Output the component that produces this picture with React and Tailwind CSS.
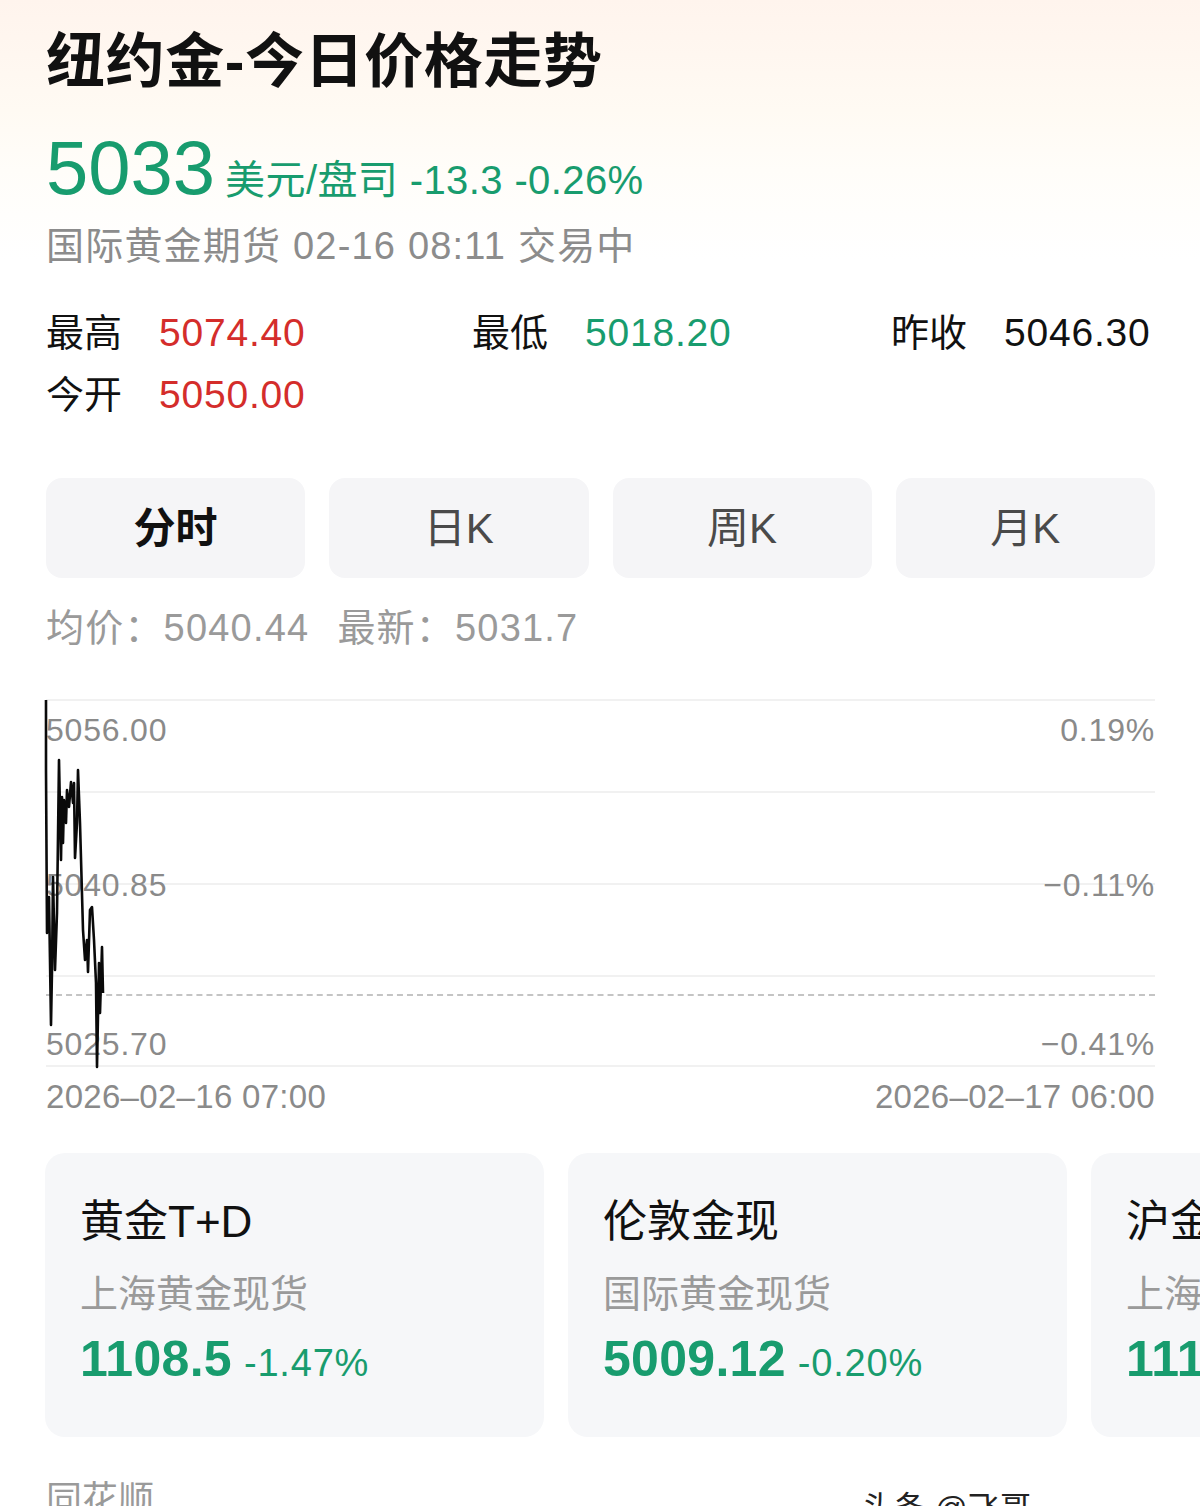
import React from "react";

const linePoints = [
  [0, 1], [0, 71], [1, 234], [3, 198], [5, 326], [6, 271], [7, 178], [9, 271],
  [11, 214], [13, 61], [15, 161], [16, 98], [17, 144], [18, 101], [20, 124],
  [21, 91], [23, 108], [25, 83], [27, 104], [28, 84], [29, 159], [31, 124],
  [32, 71], [34, 124], [37, 231], [39, 261], [41, 241], [42, 273], [44, 211],
  [46, 208], [48, 241], [50, 284], [51, 368], [53, 264], [54, 314], [56, 248],
  [57, 294],
];

const stats = [
  { label: "最高", value: "5074.40", color: "text-[#d42d2b]" },
  { label: "最低", value: "5018.20", color: "text-[#189c6e]" },
  { label: "昨收", value: "5046.30", color: "text-[#111]" },
];

const tabs = ["分时", "日K", "周K", "月K"];

const cards = [
  { title: "黄金T+D", sub: "上海黄金现货", price: "1108.5", pct: "-1.47%" },
  { title: "伦敦金现", sub: "国际黄金现货", price: "5009.12", pct: "-0.20%" },
  { title: "沪金主连", sub: "上海期货交易", price: "1110.36", pct: "-1.35%" },
];

const PriceChart = () => (
  <div className="relative h-[368px] mt-[46px]">
    {/* grid rows */}
    <div className="flex flex-col h-full">
      {[0, 1, 2, 3].map((i) => (
        <div key={i} className="h-[92px] border-t-2 border-[#f1f1f1] last:border-b-2" />
      ))}
    </div>
    <div className="absolute left-0 right-0 top-[295px] border-t-2 border-dashed border-[#c4c4c4]" />
    <div className="absolute inset-0 text-[32px] leading-[40px] text-[#8a8a8a] tracking-[0.8px]">
      <div className="absolute left-0 right-0 top-[11px] flex justify-between">
        <span>5056.00</span>
        <span>0.19%</span>
      </div>
      <div className="absolute left-0 right-0 top-[166px] flex justify-between">
        <span>5040.85</span>
        <span>−0.11%</span>
      </div>
      <div className="absolute left-0 right-0 top-[325px] flex justify-between">
        <span>5025.70</span>
        <span>−0.41%</span>
      </div>
    </div>
    <svg className="absolute left-0 top-0 overflow-visible" width="1109" height="368" viewBox="0 0 1109 368">
      <polyline
        points={linePoints.map(([x, y]) => `${x},${y}`).join(" ")}
        fill="none"
        stroke="#0a0a0a"
        strokeWidth="2.6"
        strokeLinejoin="round"
      />
    </svg>
  </div>
);

const App = () => {
  return (
    <div className="w-[1200px] h-[1506px] overflow-hidden bg-[linear-gradient(180deg,#fff4ed_0px,#fffaf3_110px,#fffdf9_170px,#ffffff_260px)] font-['Liberation_Sans','Noto_Sans_CJK_SC',sans-serif] text-[#111]">
      <div className="pl-[46px] pr-[45px]">
        <h1 className="pt-[26px] text-[59px] leading-[72px] font-bold tracking-[0.6px] text-[#111]">纽约金-今日价格走势</h1>

        <div className="mt-[30px] flex items-baseline h-[80px] text-[#189c6e]">
          <span className="text-[76px] leading-[80px]">5033</span>
          <span className="ml-[10px] text-[40px] tracking-[0.4px]">美元/盘司 -13.3 -0.26%</span>
        </div>

        <div className="mt-[14px] text-[38px] leading-[48px] text-[#8c8c8c] tracking-[1.2px]">国际黄金期货 02-16 08:11 交易中</div>

        <div className="mt-[32px] grid grid-cols-[426px_419px_1fr] text-[38px] leading-[62px]">
          {stats.map((s) => (
            <div key={s.label} className="flex">
              <span className="w-[113px]">{s.label}</span>
              <span className={`${s.color} text-[39px] tracking-[0.8px]`}>{s.value}</span>
            </div>
          ))}
          <div className="flex">
            <span className="w-[113px]">今开</span>
            <span className="text-[#d42d2b] text-[39px] tracking-[0.8px]">5050.00</span>
          </div>
        </div>

        <div className="mt-[52px] grid grid-cols-4 gap-[24px]">
          {tabs.map((t, i) => (
            <div
              key={t}
              className={`h-[100px] rounded-[16px] bg-[#f5f5f7] flex items-center justify-center text-[42px] ${
                i === 0 ? "font-bold text-[#111]" : "text-[#4a4a4a]"
              }`}
            >
              {t}
            </div>
          ))}
        </div>

        <div className="mt-[25px] flex text-[38px] leading-[50px] text-[#9a9a9a] tracking-[1.2px]">
          <span>均价：</span>
          <span>5040.44</span>
          <span className="ml-[28px]">最新：</span>
          <span>5031.7</span>
        </div>

        <PriceChart />

        <div className="mt-[10px] flex justify-between text-[33px] leading-[40px] text-[#8a8a8a] tracking-[0.3px]">
          <span>2026–02–16 07:00</span>
          <span>2026–02–17 06:00</span>
        </div>
      </div>

      <div className="mt-[36px] pl-[45px] flex gap-[24px]">
        {cards.map((c) => (
          <div key={c.title} className="w-[499px] h-[284px] shrink-0 rounded-[20px] bg-[#f6f7f9] pl-[35px] pt-[42px]">
            <div className="text-[44px] leading-[54px] text-[#111]">{c.title}</div>
            <div className="mt-[20px] text-[38px] leading-[50px] text-[#9a9a9a]">{c.sub}</div>
            <div className="mt-[8px] flex items-baseline text-[#189c6e]">
              <span className="text-[50px] leading-[64px] font-bold tracking-[0.3px]">{c.price}</span>
              <span className="ml-[12px] text-[38px] tracking-[0.8px]">{c.pct}</span>
            </div>
          </div>
        ))}
      </div>

      <div className="mt-[41px] pl-[46px] flex items-start">
        <span className="w-[816px] text-[36px] leading-[44px] text-[#9a9a9a]">同花顺</span>
        <span className="mt-[10px] text-[32px] leading-[40px] text-[#222]">头条 @飞哥</span>
      </div>
    </div>
  );
};

export default App;
